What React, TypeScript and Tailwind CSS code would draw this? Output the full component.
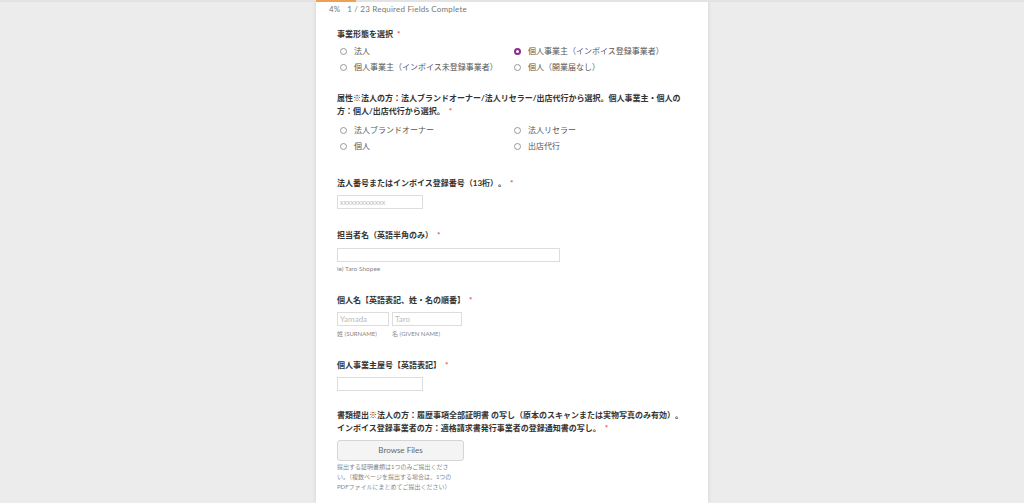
import React from "react";

const F = { fontFamily: '"Lato","Noto Sans CJK JP",sans-serif' };

const Req = () => <span className="text-[#e5534b] ml-1">*</span>;

const Radio = ({ label, checked }: { label: string; checked?: boolean }) => (
  <div className="flex items-center h-[16px]">
    <span
      className={`w-[7px] h-[7px] rounded-full border ml-[3px] mr-[7px] ${checked ? "border-[#8e2a8e] border-[2px]" : "border-[#999]"}`}
    />
    <span className="text-[8px] text-[#555]">{label}</span>
  </div>
);

const Label = ({ children }: { children: React.ReactNode }) => (
  <div className="text-[8px] font-bold text-[#333] leading-[13px]">{children}</div>
);

export default function App() {
  return (
    <div className="w-[1024px] h-[503px] bg-[#ececec] overflow-hidden relative" style={F}>
      <div className="absolute top-0 left-0 right-0 h-[2px] bg-[#e3e3e3]">
        <div className="ml-[316px] w-[40px] h-[2px] bg-[#f0a050]" />
      </div>
      <div className="ml-[316px] w-[392px] h-[503px] bg-white shadow-[0_0_4px_rgba(0,0,0,0.12)]">
        <div className="pt-[3px] pl-[13px] text-[8px] text-[#777] h-[14px] tracking-[0.2px]">4%&nbsp;&nbsp;&nbsp;1 / 23 Required Fields Complete</div>
        <div className="pl-[21px] pr-[24px]">
          <div className="mt-[14px]">
            <Label>事業形態を選択<Req /></Label>
            <div className="grid grid-cols-[174px_1fr] mt-[2px]">
              <Radio label="法人" />
              <Radio label="個人事業主（インボイス登録事業者）" checked />
              <Radio label="個人事業主（インボイス未登録事業者）" />
              <Radio label="個人（開業届なし）" />
            </div>
          </div>
          <div className="mt-[17px]">
            <Label>属性※法人の方：法人ブランドオーナー/法人リセラー/出店代行から選択。個人事業主・個人の方：個人/出店代行から選択。<Req /></Label>
            <div className="grid grid-cols-[174px_1fr] mt-[4px]">
              <Radio label="法人ブランドオーナー" />
              <Radio label="法人リセラー" />
              <Radio label="個人" />
              <Radio label="出店代行" />
            </div>
          </div>
          <div className="mt-[23px]">
            <Label>法人番号またはインボイス登録番号（13桁）。<Req /></Label>
            <div className="mt-[5px] w-[86px] h-[14px] border border-[#ddd] text-[7px] text-[#bbb] pl-[2px] leading-[12px]">xxxxxxxxxxxxx</div>
          </div>
          <div className="mt-[20px]">
            <Label>担当者名（英語半角のみ）<Req /></Label>
            <div className="mt-[6px] w-[223px] h-[14px] border border-[#ddd]" />
            <div className="text-[6.5px] text-[#888] mt-[2px]">ie) Taro Shopee</div>
          </div>
          <div className="mt-[20px]">
            <Label>個人名【英語表記、姓・名の順番】<Req /></Label>
            <div className="flex gap-[3px] mt-[5px]">
              <div>
                <div className="w-[52px] h-[14px] border border-[#ddd] text-[8px] text-[#bbb] pl-[2px] leading-[12px]">Yamada</div>
                <div className="text-[6px] text-[#888] mt-[3px]">姓 (SURNAME)</div>
              </div>
              <div>
                <div className="w-[70px] h-[14px] border border-[#ddd] text-[8px] text-[#bbb] pl-[2px] leading-[12px]">Taro</div>
                <div className="text-[6px] text-[#888] mt-[3px]">名 (GIVEN NAME)</div>
              </div>
            </div>
          </div>
          <div className="mt-[21px]">
            <Label>個人事業主屋号【英語表記】<Req /></Label>
            <div className="mt-[5px] w-[86px] h-[14px] border border-[#ddd]" />
          </div>
          <div className="mt-[18px]">
            <Label>書類提出※法人の方：履歴事項全部証明書 の写し（原本のスキャンまたは実物写真のみ有効）。インボイス登録事業者の方：適格請求書発行事業者の登録通知書の写し。<Req /></Label>
            <div className="mt-[5px] w-[127px] h-[21px] border border-[#d5d5d5] rounded-[3px] bg-[#f4f4f4] flex items-center justify-center text-[8px] text-[#666]">Browse Files</div>
            <div className="w-[122px] text-[6px] text-[#888] leading-[10px] mt-[1px]">提出する証明書類は1つのみご提出ください。（複数ページを提出する場合は、1つのPDFファイルにまとめてご提出ください）</div>
          </div>
        </div>
      </div>
    </div>
  );
}
